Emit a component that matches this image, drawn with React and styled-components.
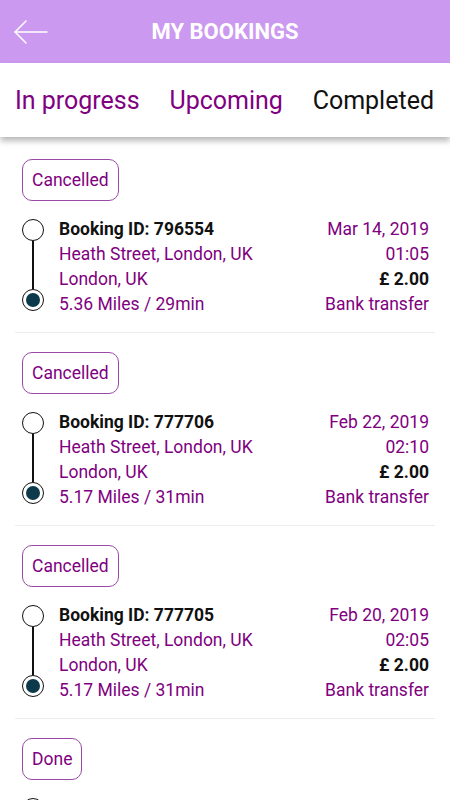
import React from 'react';
import styled, { createGlobalStyle } from 'styled-components';

const GlobalStyle = createGlobalStyle`
  body {
    margin: 0;
    background: #fff;
    font-family: Roboto, 'Noto Sans', sans-serif;
  }
`;

const Page = styled.div`
  width: 450px;
  height: 800px;
  overflow: hidden;
  background: #fff;
`;

const Header = styled.header`
  height: 63px;
  background: #cc99f0;
  display: flex;
  align-items: center;
  justify-content: center;
  position: relative;
`;

const BackButton = styled.div`
  position: absolute;
  left: 14px;
  top: 19px;
  width: 34px;
  height: 26px;
  display: flex;
`;

const Title = styled.h1`
  margin: 0;
  color: #fff;
  font-size: 22px;
  font-weight: 700;
`;

const Tabs = styled.nav`
  height: 74px;
  display: flex;
  align-items: center;
  justify-content: space-between;
  padding: 0 16px 0 15px;
  background: #fff;
  box-shadow: 0 4px 6px rgba(0, 0, 0, 0.28);
  position: relative;
  z-index: 1;
`;

const Tab = styled.span`
  font-size: 25px;
  color: ${p => (p.active ? '#111' : '#800080')};
`;

const List = styled.div`
  padding: 3px 15px 0;
`;

const Item = styled.div`
  padding-top: 19px;
  padding-bottom: 15px;
  border-bottom: 1px solid #ececec;
`;

const Badge = styled.div`
  display: inline-flex;
  align-items: center;
  height: 42px;
  box-sizing: border-box;
  padding: 0 9px;
  margin-left: 7px;
  border: 1px solid #9a4aa6;
  border-radius: 10px;
  color: #800080;
  font-size: 17.5px;
`;

const Row = styled.div`
  display: flex;
  margin-top: 16px;
  padding-right: 6px;
`;

const Track = styled.div`
  width: 22px;
  margin-left: 7px;
  margin-right: 15px;
  display: flex;
  flex-direction: column;
  align-items: center;
  padding-top: 2px;
`;

const Dot = styled.div`
  width: 22px;
  height: 22px;
  box-sizing: border-box;
  border: 1.5px solid #111;
  border-radius: 50%;
  background: #fff;
  display: flex;
  align-items: center;
  justify-content: center;

  &::after {
    content: '';
    display: ${p => (p.filled ? 'block' : 'none')};
    width: 14px;
    height: 14px;
    border-radius: 50%;
    background: #0c3a4a;
  }
`;

const Line = styled.div`
  width: 1.5px;
  height: 48px;
  background: #111;
`;

const Col = styled.div`
  flex: ${p => (p.right ? '0 0 auto' : '1')};
  display: flex;
  flex-direction: column;
  align-items: ${p => (p.right ? 'flex-end' : 'flex-start')};
  white-space: nowrap;
`;

const Text = styled.div`
  font-size: 17.5px;
  line-height: 25px;
  color: ${p => (p.dark ? '#111' : '#800080')};
  font-weight: ${p => (p.bold ? 700 : 400)};
`;

const bookings = [
  { status: 'Cancelled', id: '796554', date: 'Mar 14, 2019', time: '01:05', dist: '5.36 Miles / 29min' },
  { status: 'Cancelled', id: '777706', date: 'Feb 22, 2019', time: '02:10', dist: '5.17 Miles / 31min' },
  { status: 'Cancelled', id: '777705', date: 'Feb 20, 2019', time: '02:05', dist: '5.17 Miles / 31min' },
  { status: 'Done', id: '777704', date: 'Feb 18, 2019', time: '01:40', dist: '5.17 Miles / 31min' },
];

const BackArrow = () => (
  <svg width="34" height="26" viewBox="0 0 34 26" fill="none" stroke="#fff" strokeWidth="1.5" strokeLinecap="round">
    <path d="M1 13 H33" />
    <path d="M12 2 L1 13 L12 24" />
  </svg>
);

export default function App() {
  return (
    <Page>
      <GlobalStyle />
      <Header>
        <BackButton>
          <BackArrow />
        </BackButton>
        <Title>MY BOOKINGS</Title>
      </Header>
      <Tabs>
        <Tab>In progress</Tab>
        <Tab>Upcoming</Tab>
        <Tab active>Completed</Tab>
      </Tabs>
      <List>
        {bookings.map(b => (
          <Item key={b.id}>
            <Badge>{b.status}</Badge>
            <Row>
              <Track>
                <Dot />
                <Line />
                <Dot filled />
              </Track>
              <Col>
                <Text dark bold>Booking ID: {b.id}</Text>
                <Text>Heath Street, London, UK</Text>
                <Text>London, UK</Text>
                <Text>{b.dist}</Text>
              </Col>
              <Col right>
                <Text>{b.date}</Text>
                <Text>{b.time}</Text>
                <Text dark bold>£ 2.00</Text>
                <Text>Bank transfer</Text>
              </Col>
            </Row>
          </Item>
        ))}
      </List>
    </Page>
  );
}
